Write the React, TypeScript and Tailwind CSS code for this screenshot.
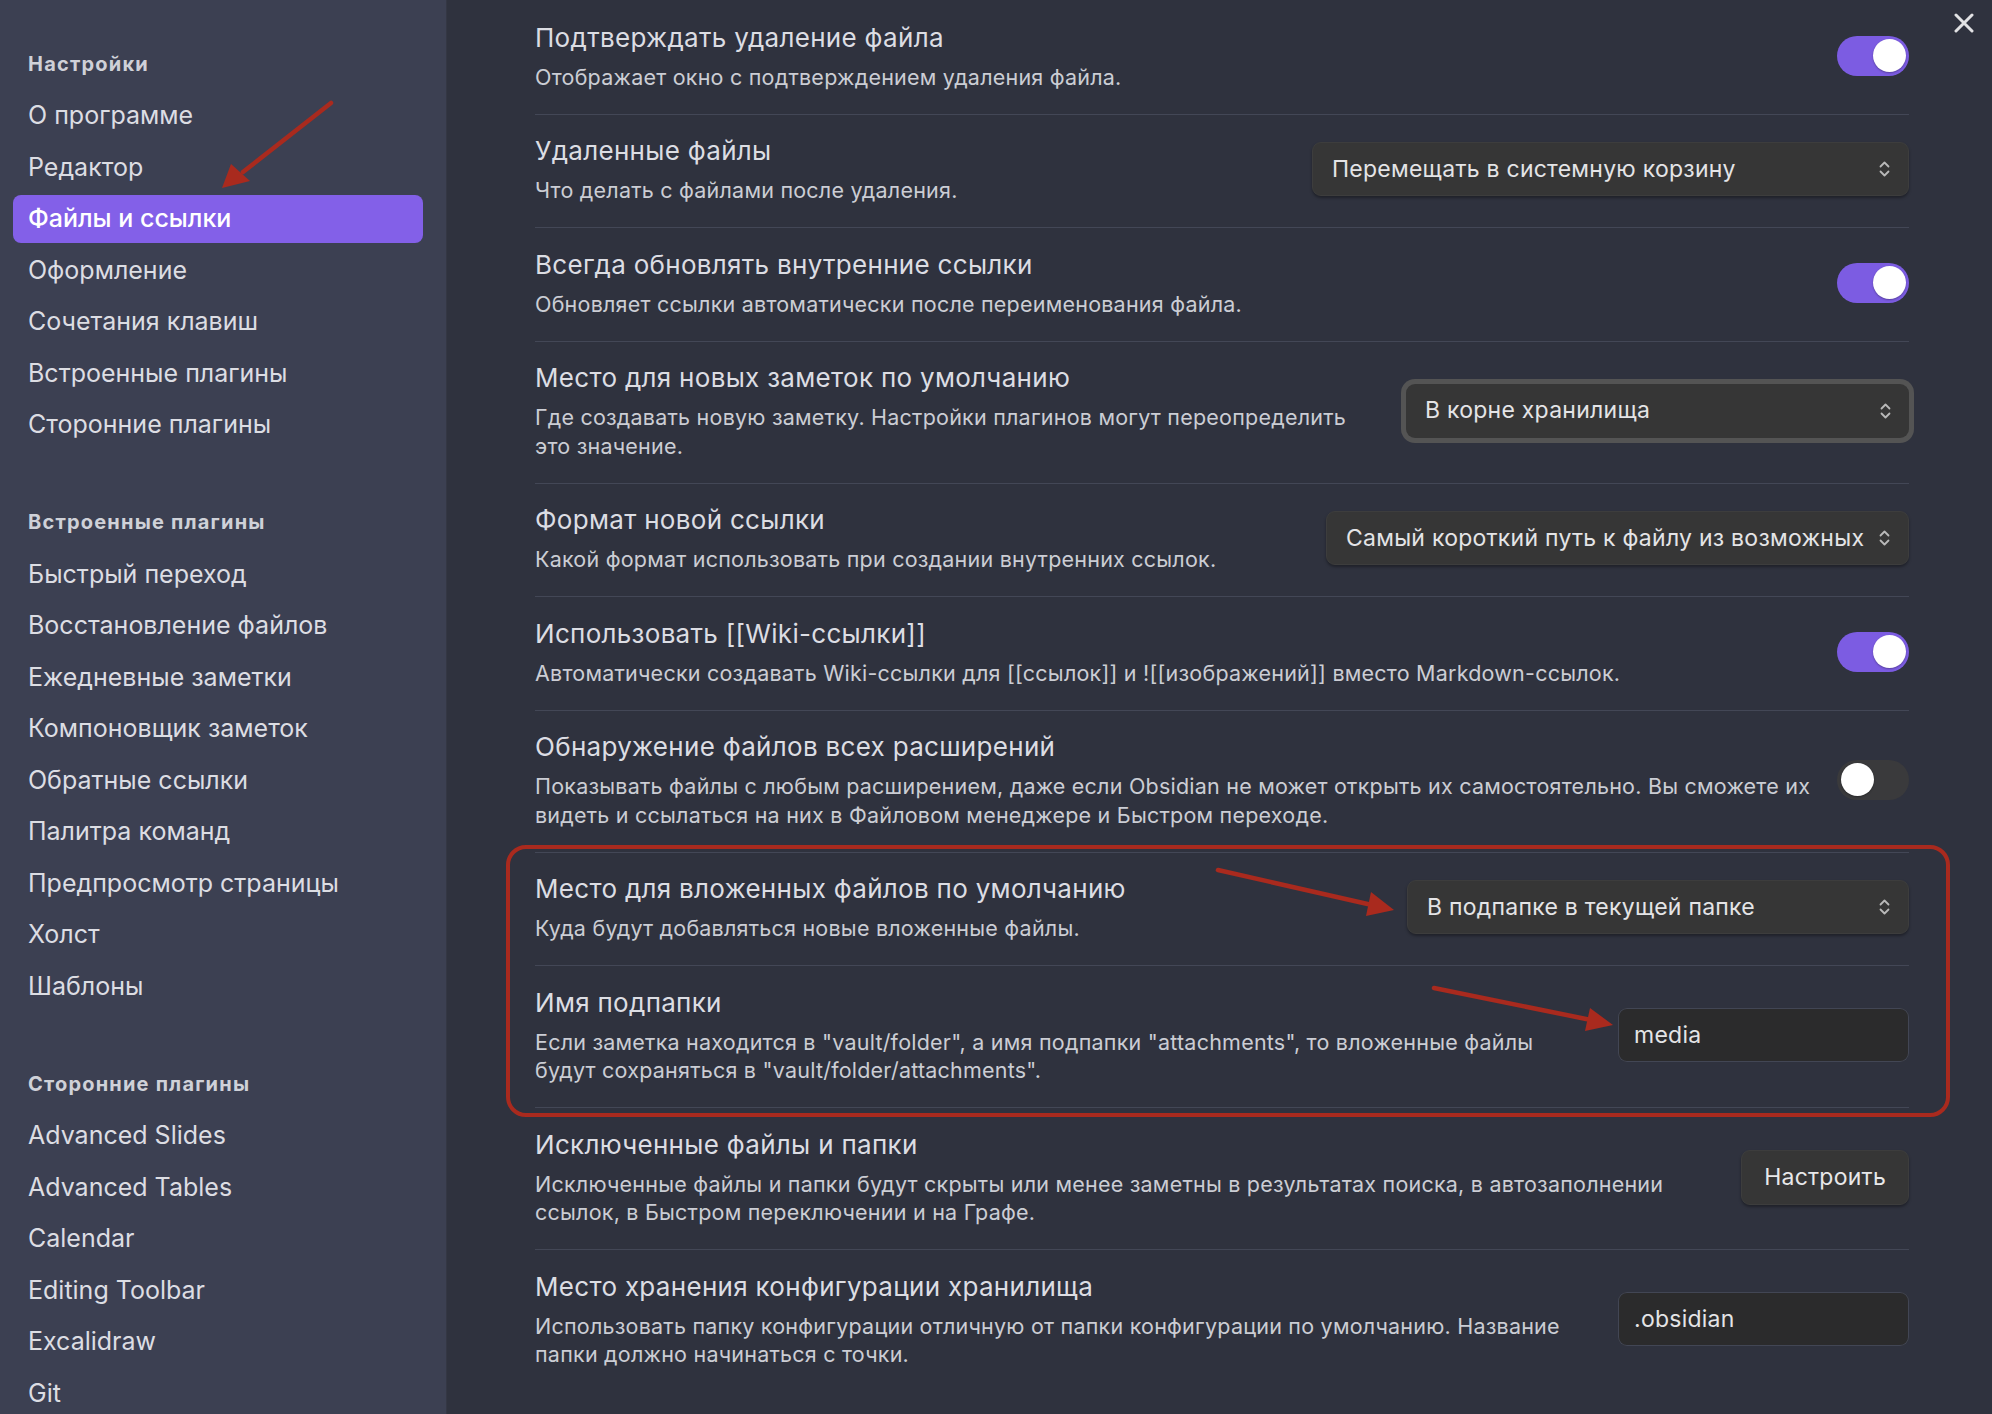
import React from "react";

type Control =
  | { kind: "toggle"; on: boolean }
  | { kind: "select"; value: string; width: string; focused?: boolean }
  | { kind: "input"; value: string }
  | { kind: "button"; label: string };

type Setting = {
  name: string;
  desc: string[];
  control: Control;
};

const NAV_GROUPS = [
  {
    title: "Настройки",
    items: [
      "О программе",
      "Редактор",
      "Файлы и ссылки",
      "Оформление",
      "Сочетания клавиш",
      "Встроенные плагины",
      "Сторонние плагины",
    ],
  },
  {
    title: "Встроенные плагины",
    items: [
      "Быстрый переход",
      "Восстановление файлов",
      "Ежедневные заметки",
      "Компоновщик заметок",
      "Обратные ссылки",
      "Палитра команд",
      "Предпросмотр страницы",
      "Холст",
      "Шаблоны",
    ],
  },
  {
    title: "Сторонние плагины",
    items: ["Advanced Slides", "Advanced Tables", "Calendar", "Editing Toolbar", "Excalidraw", "Git"],
  },
];

const ACTIVE_ITEM = "Файлы и ссылки";

const SETTINGS: Setting[] = [
  {
    name: "Подтверждать удаление файла",
    desc: ["Отображает окно с подтверждением удаления файла."],
    control: { kind: "toggle", on: true },
  },
  {
    name: "Удаленные файлы",
    desc: ["Что делать с файлами после удаления."],
    control: { kind: "select", value: "Перемещать в системную корзину", width: "w-[597px]" },
  },
  {
    name: "Всегда обновлять внутренние ссылки",
    desc: ["Обновляет ссылки автоматически после переименования файла."],
    control: { kind: "toggle", on: true },
  },
  {
    name: "Место для новых заметок по умолчанию",
    desc: ["Где создавать новую заметку. Настройки плагинов могут переопределить", "это значение."],
    control: { kind: "select", value: "В корне хранилища", width: "w-[503px]", focused: true },
  },
  {
    name: "Формат новой ссылки",
    desc: ["Какой формат использовать при создании внутренних ссылок."],
    control: { kind: "select", value: "Самый короткий путь к файлу из возможных", width: "w-[583px]" },
  },
  {
    name: "Использовать [[Wiki-ссылки]]",
    desc: ["Автоматически создавать Wiki-ссылки для [[ссылок]] и ![[изображений]] вместо Markdown-ссылок."],
    control: { kind: "toggle", on: true },
  },
  {
    name: "Обнаружение файлов всех расширений",
    desc: [
      "Показывать файлы с любым расширением, даже если Obsidian не может открыть их самостоятельно. Вы сможете их",
      "видеть и ссылаться на них в Файловом менеджере и Быстром переходе.",
    ],
    control: { kind: "toggle", on: false },
  },
  {
    name: "Место для вложенных файлов по умолчанию",
    desc: ["Куда будут добавляться новые вложенные файлы."],
    control: { kind: "select", value: "В подпапке в текущей папке", width: "w-[502px]" },
  },
  {
    name: "Имя подпапки",
    desc: [
      "Если заметка находится в \"vault/folder\", а имя подпапки \"attachments\", то вложенные файлы",
      "будут сохраняться в \"vault/folder/attachments\".",
    ],
    control: { kind: "input", value: "media" },
  },
  {
    name: "Исключенные файлы и папки",
    desc: [
      "Исключенные файлы и папки будут скрыты или менее заметны в результатах поиска, в автозаполнении",
      "ссылок, в Быстром переключении и на Графе.",
    ],
    control: { kind: "button", label: "Настроить" },
  },
  {
    name: "Место хранения конфигурации хранилища",
    desc: [
      "Использовать папку конфигурации отличную от папки конфигурации по умолчанию. Название",
      "папки должно начинаться с точки.",
    ],
    control: { kind: "input", value: ".obsidian" },
  },
];

const Chevrons = () => (
  <svg width="13" height="18" viewBox="0 0 13 18" fill="none" aria-hidden="true">
    <path d="M2.5 6.5 L6.5 2.5 L10.5 6.5" stroke="#b9b9b9" strokeWidth="1.8" strokeLinecap="round" strokeLinejoin="round" />
    <path d="M2.5 11.5 L6.5 15.5 L10.5 11.5" stroke="#b9b9b9" strokeWidth="1.8" strokeLinecap="round" strokeLinejoin="round" />
  </svg>
);

const Toggle = ({ on }: { on: boolean }) => (
  <div
    className={`flex h-[40px] w-[72px] shrink-0 items-center rounded-full px-[3.5px] ${
      on ? "justify-end bg-[#7c5ce2]" : "justify-start bg-[#3a3a3c]"
    }`}
  >
    <span className="h-[33px] w-[33px] rounded-full bg-white shadow-[0_1px_2px_rgba(0,0,0,0.3)]" />
  </div>
);

const ControlView = ({ control }: { control: Control }) => {
  if (control.kind === "toggle") return <Toggle on={control.on} />;
  if (control.kind === "select") {
    return (
      <div
        className={`flex h-[54px] shrink-0 items-center justify-between rounded-[9px] bg-[#363636] pl-[19px] pr-[17px] text-[23px] tracking-[0.25px] text-[#e4e4e6] ${
          control.width
        } ${
          control.focused
            ? "shadow-[0_0_0_5px_#545454]"
            : "border border-[#3d3d3d] shadow-[0_2px_3px_rgba(0,0,0,0.35)]"
        }`}
      >
        <span className="whitespace-nowrap">{control.value}</span>
        <Chevrons />
      </div>
    );
  }
  if (control.kind === "input") {
    return (
      <div className="flex h-[54px] w-[291px] shrink-0 items-center rounded-[9px] bg-[#2b2b2c] px-[16px] text-[23px] tracking-[0.25px] text-[#e4e4e6] shadow-[inset_0_0_0_1px_#424654]">
        {control.value}
      </div>
    );
  }
  return (
    <button
      type="button"
      className="flex h-[55px] shrink-0 items-center rounded-[9px] border border-[#3d3d3d] bg-[#363636] px-[22px] text-[23px] tracking-[0.25px] text-[#e8e8ea] shadow-[0_2px_3px_rgba(0,0,0,0.35)]"
    >
      {control.label}
    </button>
  );
};

const Sidebar = () => (
  <aside className="flex w-[447px] shrink-0 flex-col gap-[58px] border-r border-[#343744] bg-[#3c4052] pl-[13px] pr-[23px] pt-[48.5px]">
    {NAV_GROUPS.map((group) => (
      <div key={group.title}>
        <div className="mb-[13.5px] flex h-[30px] items-center pl-[15px] text-[20px] font-bold tracking-[1.2px] text-[#cfd1d8]">
          {group.title}
        </div>
        <div className="flex flex-col gap-[3.5px]">
          {group.items.map((item) => (
            <div
              key={item}
              className={`flex h-[48px] items-center rounded-[8px] pl-[15px] text-[25px] ${
                item === ACTIVE_ITEM ? "bg-[#8360e8] font-medium text-white" : "text-[#dcdde3]"
              }`}
            >
              {item}
            </div>
          ))}
        </div>
      </div>
    ))}
  </aside>
);

const Annotations = () => (
  <>
    <div className="pointer-events-none absolute left-[506px] top-[845px] h-[272px] w-[1444px] rounded-[20px] border-4 border-[#a92a1e]" />
    <svg
      className="pointer-events-none absolute left-0 top-0"
      width="1992"
      height="1414"
      viewBox="0 0 1992 1414"
      aria-hidden="true"
    >
      <g stroke="#a92a1e" strokeWidth="4.5" strokeLinecap="round" fill="#a92a1e">
        <line x1="331" y1="103" x2="243" y2="172" />
        <polygon points="222,188 231,164 250,181" stroke="none" />
        <line x1="1218" y1="870" x2="1372" y2="905" />
        <polygon points="1394,910 1371,892 1366,916" stroke="none" />
        <line x1="1434" y1="988" x2="1591" y2="1020" />
        <polygon points="1613,1025 1590,1008 1585,1031" stroke="none" />
      </g>
    </svg>
  </>
);

export default function App() {
  return (
    <div className="relative flex h-[1414px] w-full overflow-hidden bg-[#2f323e] font-['Inter','Noto_Sans',sans-serif] antialiased">
      <Sidebar />
      <main className="min-w-0 flex-1 pl-[88px] pr-[83px]">
        {SETTINGS.map((setting, index) => (
          <div
            key={setting.name}
            className={`flex items-center justify-between gap-[24px] pb-[22.8px] ${
              index === 0 ? "pt-[20.5px]" : "border-t border-[#434756] pt-[19.5px]"
            }`}
          >
            <div className="min-w-0">
              <div className="text-[26px] leading-[34px] tracking-[0.3px] text-[#dcdde3]">{setting.name}</div>
              <div className="mt-[8px] text-[21.5px] leading-[28.3px] tracking-[0.22px] text-[#cbcdd4]">
                {setting.desc.map((line) => (
                  <div key={line} className="whitespace-nowrap">
                    {line}
                  </div>
                ))}
              </div>
            </div>
            <ControlView control={setting.control} />
          </div>
        ))}
      </main>
      <button type="button" className="absolute right-[18px] top-[13px] h-[20px] w-[20px]" aria-label="Закрыть">
        <svg width="20" height="20" viewBox="0 0 20 20" fill="none">
          <path d="M2 2 L18 18 M18 2 L2 18" stroke="#e2e2e4" strokeWidth="3" strokeLinecap="round" />
        </svg>
      </button>
      <Annotations />
    </div>
  );
}
